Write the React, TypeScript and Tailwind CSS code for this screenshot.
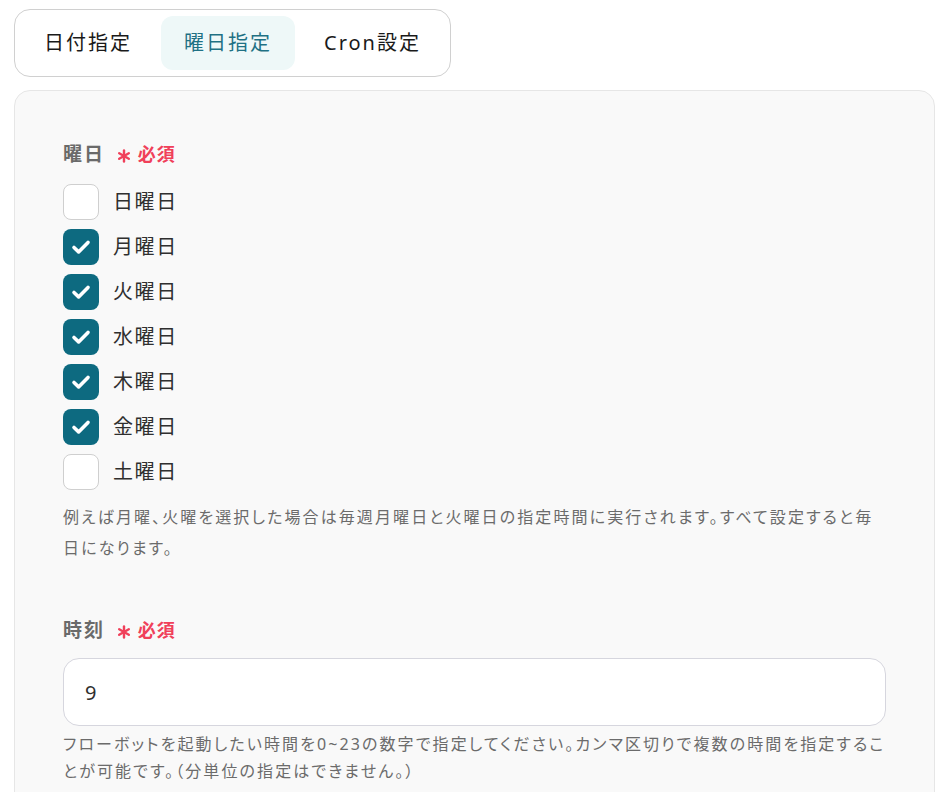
import React, { useState } from "react";

const FONT = { fontFamily: '"Noto Sans", "Noto Sans CJK JP", sans-serif' };
const PALT = { fontFeatureSettings: '"palt"' };

const TABS = ["日付指定", "曜日指定", "Cron設定"];

const DAYS = [
  { label: "日曜日", checked: false },
  { label: "月曜日", checked: true },
  { label: "火曜日", checked: true },
  { label: "水曜日", checked: true },
  { label: "木曜日", checked: true },
  { label: "金曜日", checked: true },
  { label: "土曜日", checked: false },
];

function Asterisk() {
  return (
    <svg width="14" height="14" viewBox="0 0 14 14" stroke="#f0405a" strokeWidth="2.4" strokeLinecap="round">
      <line x1="7" y1="1.5" x2="7" y2="12.5" />
      <line x1="2.2" y1="4.2" x2="11.8" y2="9.8" />
      <line x1="2.2" y1="9.8" x2="11.8" y2="4.2" />
    </svg>
  );
}

function RequiredLabel({ children }: { children: React.ReactNode }) {
  return (
    <div className="flex items-center h-[26px]">
      <span className="text-[19px] leading-[26px] font-bold text-[#6a6a6a] tracking-[0.1em]">{children}</span>
      <span className="ml-[12px] mt-[3px]">
        <Asterisk />
      </span>
      <span className="ml-[7px] text-[18px] leading-[26px] font-bold text-[#f0405a] tracking-[0.05em]">必須</span>
    </div>
  );
}

function Checkbox({ checked, onToggle }: { checked: boolean; onToggle: () => void }) {
  return (
    <button
      onClick={onToggle}
      className={`w-9 h-9 rounded-lg flex items-center justify-center ${
        checked ? "bg-[#0d6a80]" : "bg-white border border-[#cfcfcf]"
      }`}
    >
      {checked && (
        <svg width="22" height="22" viewBox="0 0 22 22" fill="none">
          <path d="M4 11.5l4.6 4.4L18 6.4" stroke="white" strokeWidth="3.6" strokeLinecap="round" strokeLinejoin="round" />
        </svg>
      )}
    </button>
  );
}

export default function App() {
  const [tab, setTab] = useState(1);
  const [days, setDays] = useState(DAYS);
  const [hour, setHour] = useState("9");

  return (
    <div className="min-h-screen bg-white pl-[14px] pt-[9px] pr-3" style={FONT}>
      {/* Tabs */}
      <div className="inline-flex gap-[6px] p-[6px] border border-[#d0d0d0] rounded-2xl bg-white">
        {TABS.map((t, i) => (
          <button
            key={t}
            onClick={() => setTab(i)}
            className={`h-[54px] px-[23px] rounded-xl text-[20px] tracking-[0.1em] ${
              tab === i ? "bg-[#eef8f8] text-[#1f7184]" : "text-[#1a1a1a]"
            }`}
          >
            {t}
          </button>
        ))}
      </div>

      {/* Settings panel */}
      <div className="mt-[13px] w-[921px] bg-[#f9f9f9] border border-[#e6e6e6] rounded-2xl px-12 pt-[50px] pb-10">
        <RequiredLabel>曜日</RequiredLabel>

        <div className="mt-[17px] flex flex-col gap-[9px]">
          {days.map((d, i) => (
            <div key={d.label} className="flex items-center gap-[14px]">
              <Checkbox
                checked={d.checked}
                onToggle={() =>
                  setDays(days.map((x, j) => (j === i ? { ...x, checked: !x.checked } : x)))
                }
              />
              <span className="text-[20px] text-[#2f2f2f] tracking-[0.08em]">{d.label}</span>
            </div>
          ))}
        </div>

        <p className="mt-[12px] text-[16px] leading-[31px] text-[#6b6b6b] tracking-[2.1px]" style={PALT}>
          例えば月曜、火曜を選択した場合は毎週月曜日と火曜日の指定時間に実行されます。すべて設定すると毎日になります。
        </p>

        <div className="mt-[53px]">
          <RequiredLabel>時刻</RequiredLabel>
        </div>

        <input
          value={hour}
          onChange={(e) => setHour(e.target.value)}
          className="mt-[15px] w-full h-[68px] rounded-2xl border border-[#d6d6de] bg-white px-[21px] text-[20px] text-[#2f2f2f] outline-none"
        />

        <p className="mt-[5px] text-[16px] leading-[27px] text-[#6b6b6b] tracking-[2.1px]" style={PALT}>
          フローボットを起動したい時間を0~23の数字で指定してください。カンマ区切りで複数の時間を指定することが可能です。（分単位の指定はできません。）
        </p>
      </div>
    </div>
  );
}
